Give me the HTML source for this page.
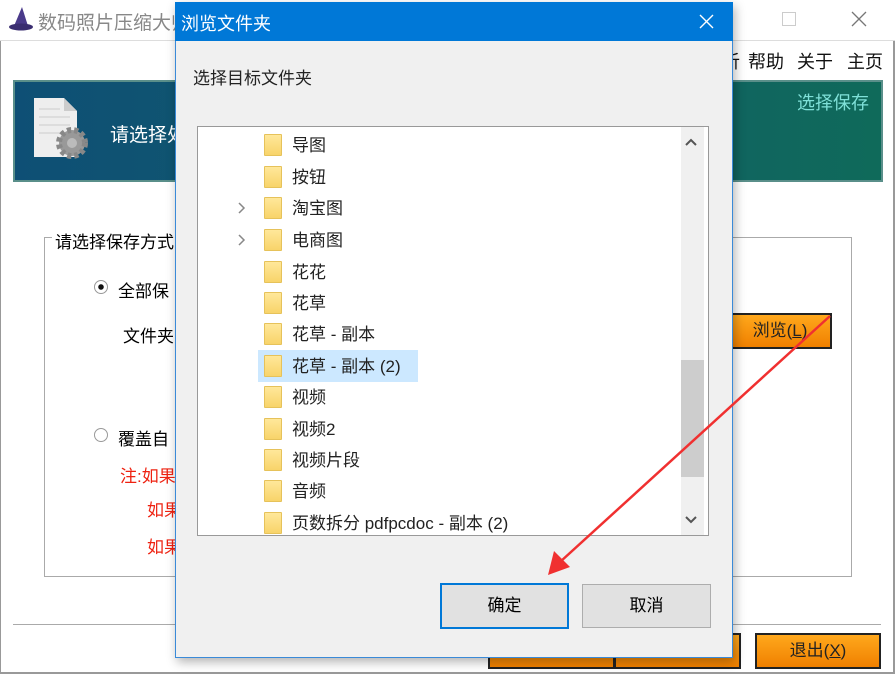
<!DOCTYPE html>
<html><head><meta charset="utf-8"><style>
*{margin:0;padding:0;box-sizing:border-box}
body{width:895px;height:674px;position:relative;overflow:hidden;background:#fff;font-family:"Liberation Sans","Microsoft YaHei","Noto Sans CJK SC",sans-serif;}
.a{position:absolute}
.f{position:absolute;left:264px;width:18px;height:22px;background:linear-gradient(#ffe89a,#f8d46a);border:1px solid #e6c25a;border-radius:1px}
.t{position:absolute;left:292px;font-size:17px;color:#222;line-height:20px}
.ob{position:absolute;background:linear-gradient(#ffa81c,#f08000);border:2px solid #222;font-size:17px;color:#222;text-align:center}
</style></head><body>
<div class="a" style="left:0;top:0;width:895px;height:41px;background:#fff;border-bottom:1px solid #ddd"></div>
<svg class="a" style="left:8px;top:6px" width="26" height="26"><polygon points="14,1 6,20 20,20" fill="#4a3a8a"/><ellipse cx="13" cy="21" rx="12" ry="3.5" fill="#3a2d70"/></svg>
<div class="a" style="left:38px;top:8px;font-size:19px;color:#888">数码照片压缩大师</div>
<div class="a" style="left:782px;top:12px;width:14px;height:14px;border:1px solid #ccc"></div>
<svg class="a" style="left:851px;top:11px" width="16" height="16"><path d="M1 1L15 15M15 1L1 15" stroke="#777" stroke-width="1.3"/></svg>
<div class="a" style="left:0;top:41px;width:1px;height:633px;background:#999"></div>
<div class="a" style="left:893px;top:41px;width:2px;height:633px;background:#999"></div>
<div class="a" style="left:722px;top:48px;font-size:18px;color:#111">析</div>
<div class="a" style="left:748px;top:48px;font-size:18px;color:#111">帮助</div>
<div class="a" style="left:797px;top:48px;font-size:18px;color:#111">关于</div>
<div class="a" style="left:847px;top:48px;font-size:18px;color:#111">主页</div>
<div class="a" style="left:13px;top:80px;width:870px;height:102px;background:linear-gradient(90deg,#0e4f75,#125c6a 50%,#0f6a5a);border:2px solid #5a8f8a"></div>
<svg class="a" style="left:30px;top:95px" width="66" height="70"><path d="M4 3H34L47 16V62H4Z" fill="#eee"/><path d="M34 3V16H47" fill="#ccc"/><g stroke="#ccc"><line x1="9" y1="14" x2="30" y2="14"/><line x1="9" y1="22" x2="40" y2="22"/><line x1="9" y1="30" x2="40" y2="30"/><line x1="9" y1="38" x2="30" y2="38"/></g><circle cx="42" cy="48" r="13" fill="#999" stroke="#888" stroke-width="6" stroke-dasharray="4 3"/><circle cx="42" cy="48" r="5" fill="#bbb"/></svg>
<div class="a" style="left:110px;top:120px;font-size:19px;color:#fff">请选择处</div>
<div class="a" style="left:797px;top:89px;font-size:18px;color:#7fe0d8">选择保存</div>
<div class="a" style="left:44px;top:237px;width:808px;height:340px;border:1px solid #aaa"></div>
<div class="a" style="left:52px;top:228px;background:#fff;font-size:17px;padding:0 3px">请选择保存方式</div>
<div class="a" style="left:94px;top:280px;width:14px;height:14px;border-radius:50%;border:1px solid #999;background:radial-gradient(#111 2.5px,#fff 3px)"></div>
<div class="a" style="left:118px;top:277px;font-size:17px">全部保</div>
<div class="a" style="left:123px;top:322px;font-size:17px">文件夹</div>
<div class="a" style="left:94px;top:428px;width:14px;height:14px;border-radius:50%;border:1px solid #999"></div>
<div class="a" style="left:118px;top:425px;font-size:17px">覆盖自</div>
<div class="a" style="left:120px;top:462px;font-size:17px;color:#e21">注:如果</div>
<div class="a" style="left:147px;top:496px;font-size:17px;color:#e21">如果</div>
<div class="a" style="left:147px;top:533px;font-size:17px;color:#e21">如果</div>
<div class="ob" style="left:728px;top:313px;width:104px;height:36px;line-height:32px">浏览(<u>L</u>)</div>
<div class="a" style="left:13px;top:624px;width:868px;height:1px;background:#aaa"></div>
<div class="ob" style="left:488px;top:633px;width:127px;height:36px"></div>
<div class="ob" style="left:614px;top:633px;width:127px;height:36px"></div>
<div class="ob" style="left:755px;top:633px;width:126px;height:36px;line-height:32px">退出(<u>X</u>)</div>
<div class="a" style="left:0;top:672px;width:895px;height:2px;background:#999"></div>
<div class="a" style="left:175px;top:2px;width:558px;height:656px;background:#f0f0f0;border:1px solid #3a8ad8;box-shadow:2px 4px 10px rgba(0,0,0,.3)"></div>
<div class="a" style="left:175px;top:2px;width:558px;height:39px;background:#0078d7"></div>
<div class="a" style="left:181px;top:10px;font-size:18px;color:#fff">浏览文件夹</div>
<svg class="a" style="left:699px;top:14px" width="15" height="15"><path d="M1 1L14 14M14 1L1 14" stroke="#fff" stroke-width="1.4"/></svg>
<div class="a" style="left:193px;top:64px;font-size:17px;color:#222">选择目标文件夹</div>
<div class="a" style="left:197px;top:126px;width:512px;height:410px;background:#fff;border:1px solid #999"></div>
<div class="a" style="left:681px;top:127px;width:23px;height:408px;background:#f0f0f0"></div>
<div class="a" style="left:681px;top:360px;width:23px;height:117px;background:#cdcdcd"></div>
<svg class="a" style="left:685px;top:138px" width="12" height="8"><path d="M1 7L6 2L11 7" stroke="#555" stroke-width="2" fill="none"/></svg>
<svg class="a" style="left:685px;top:516px" width="12" height="8"><path d="M1 1L6 6L11 1" stroke="#555" stroke-width="2" fill="none"/></svg>
<div class="a" style="left:258px;top:350px;width:160px;height:32px;background:#cce8ff"></div>
<svg class="a" style="left:238px;top:202px" width="8" height="12"><path d="M1 1L6 6L1 11" stroke="#888" stroke-width="1.5" fill="none"/></svg>
<svg class="a" style="left:238px;top:234px" width="8" height="12"><path d="M1 1L6 6L1 11" stroke="#888" stroke-width="1.5" fill="none"/></svg>
<div class="f" style="top:134px"></div><div class="t" style="top:136px">导图</div>
<div class="f" style="top:166px"></div><div class="t" style="top:168px">按钮</div>
<div class="f" style="top:197px"></div><div class="t" style="top:199px">淘宝图</div>
<div class="f" style="top:229px"></div><div class="t" style="top:231px">电商图</div>
<div class="f" style="top:261px"></div><div class="t" style="top:263px">花花</div>
<div class="f" style="top:292px"></div><div class="t" style="top:294px">花草</div>
<div class="f" style="top:323px"></div><div class="t" style="top:325px">花草 - 副本</div>
<div class="f" style="top:355px"></div><div class="t" style="top:357px">花草 - 副本 (2)</div>
<div class="f" style="top:386px"></div><div class="t" style="top:388px">视频</div>
<div class="f" style="top:418px"></div><div class="t" style="top:420px">视频2</div>
<div class="f" style="top:449px"></div><div class="t" style="top:451px">视频片段</div>
<div class="f" style="top:480px"></div><div class="t" style="top:482px">音频</div>
<div class="f" style="top:512px;height:22px"></div><div class="t" style="top:514px">页数拆分 pdfpcdoc - 副本 (2)</div>
<div class="a" style="left:198px;top:535px;width:511px;height:1px;background:#999"></div>
<div class="a" style="left:440px;top:583px;width:129px;height:46px;background:#e1e1e1;border:2px solid #0078d7;font-size:17px;text-align:center;line-height:42px">确定</div>
<div class="a" style="left:582px;top:584px;width:129px;height:44px;background:#e1e1e1;border:1px solid #adadad;font-size:17px;text-align:center;line-height:42px">取消</div>
<svg class="a" style="left:0;top:0" width="895" height="674"><line x1="830" y1="316" x2="560" y2="562" stroke="#f03030" stroke-width="2.5"/><polygon points="548,575 554,551 570,567" fill="#f03030"/></svg>
</body></html>
